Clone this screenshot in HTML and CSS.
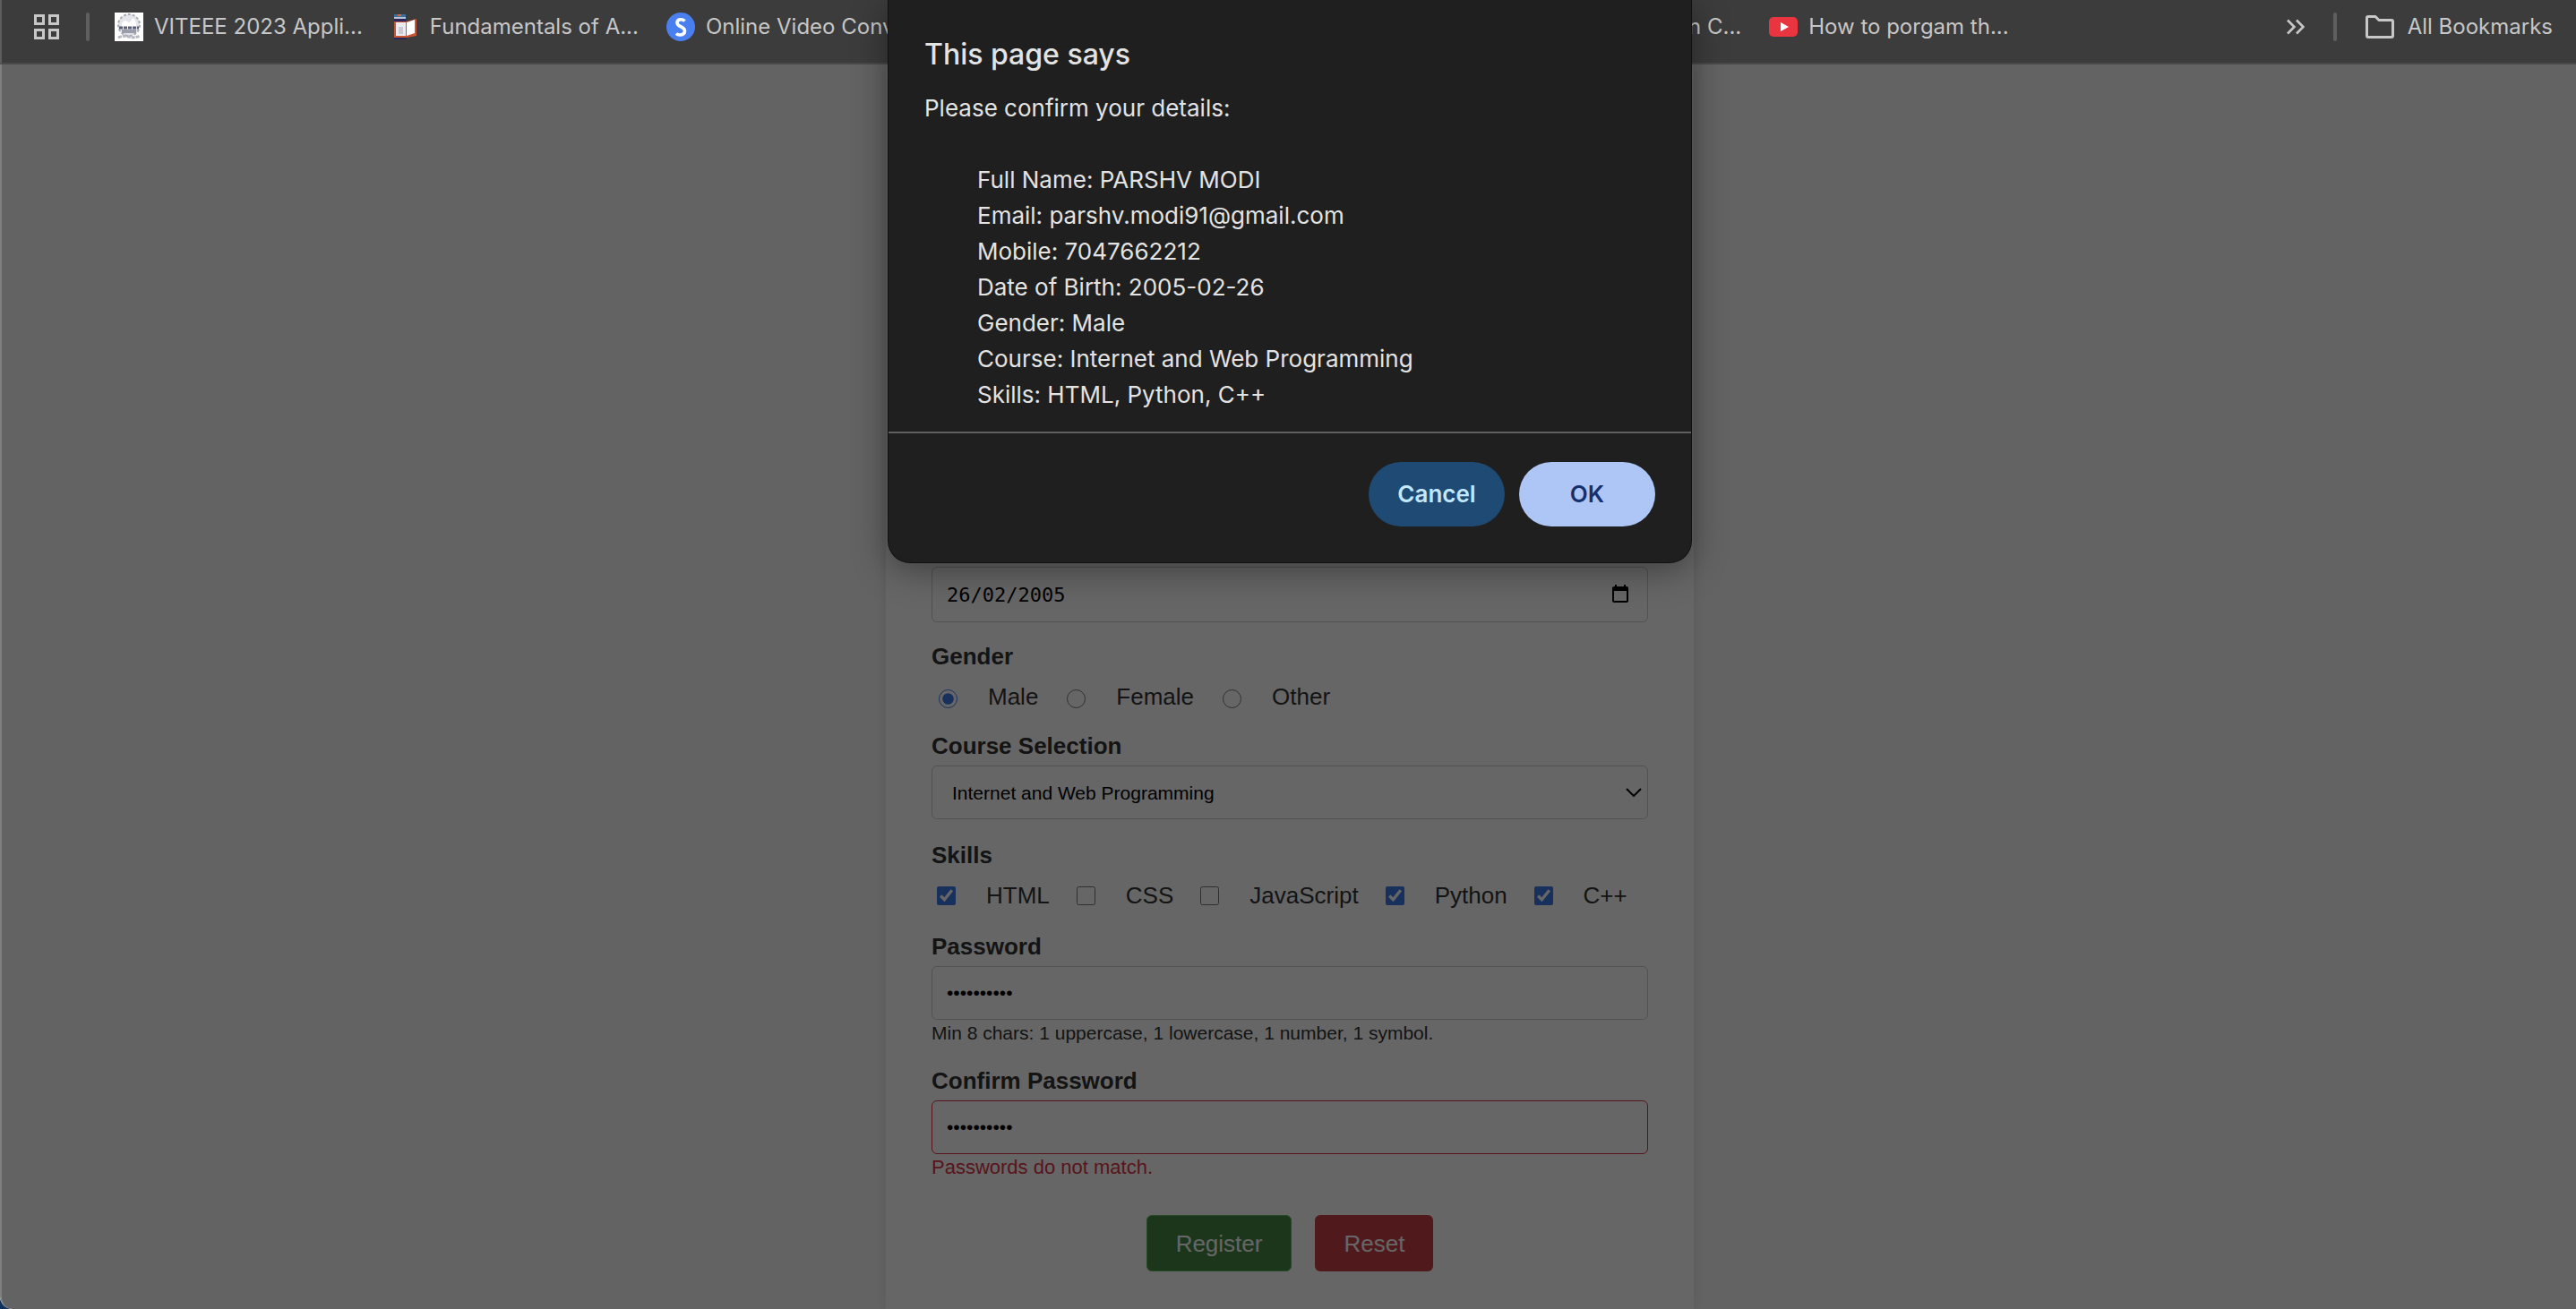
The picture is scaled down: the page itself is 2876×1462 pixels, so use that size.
FILE: index.html
```html
<!DOCTYPE html>
<html lang="en">
<head>
<meta charset="utf-8">
<title>Registration Form</title>
<link rel="stylesheet" href="styles.css">
</head>
<body>
<nav class="bookmarks" aria-label="Bookmarks">
  <button class="icon-button" aria-label="Tab groups">
    <svg width="28" height="28" viewBox="0 0 28 28" fill="none" stroke="#c7c7c7" stroke-width="3"><path d="M1.5 1.5h9v9h-9zM17.500 1.500h9v9h-9zM1.500 17.500h9v9h-9zM17.500 17.500h9v9h-9z"/></svg>
  </button>
  <span class="separator"></span>
  <div class="bookmark-list">
    <a class="bookmark" href="#">
      <svg width="32" height="32" viewBox="0 0 32 32"><path fill="#fff" d="M0 0h32v32H0z"/><circle cx="16" cy="14" r="12" fill="#e4e5ea" stroke="#a9abb5" stroke-width="2" stroke-dasharray="3 2"/><path d="M8 12q3-5 6-2t5-2 5 4v6H8z" fill="#fff"/><path d="M5 17h22" stroke="#5c6076" stroke-width="3" stroke-dasharray="4 1"/><path d="M8 21h16" stroke="#9a9daa" stroke-width="4"/><path d="M4 28q6-3 12-1t12-1" stroke="#b4b6c0" stroke-width="3" fill="none" stroke-dasharray="4 1"/></svg>
      <span>VITEEE 2023 Appli...</span>
    </a>
    <a class="bookmark" href="#">
      <svg width="32" height="32" viewBox="0 0 32 32"><path fill="#3b6f9e" d="M4 2h13v5H4z"/><path fill="#d4683f" d="M8 2h4v2H8z"/><path fill="#b9c3d8" d="M4 5h13v2H4z"/><path fill="#29265c" d="M4 7h13v3H4zM4 27h14v3H4z"/><path fill="#c85634" d="M4 10h14l11-3v19l-11 2H4z"/><path fill="#eceaf0" d="M6 11h11v15H6z"/><path fill="#fff" d="M18 11l9-3v15l-9 3z"/><path fill="#c8cad8" d="M9 16h5v8H9z"/></svg>
      <span>Fundamentals of A...</span>
    </a>
    <a class="bookmark" href="#">
      <svg width="32" height="32" viewBox="0 0 32 32"><circle cx="16" cy="16" r="16" fill="#4a7ff0"/><path d="M20.500 9.500C18 7 12 7 12 11.500c0 5 8.500 3.500 8.500 9 0 5-7 5.500-9.500 3" fill="none" stroke="#fff" stroke-width="3.600"/></svg>
      <span>Online Video Conv</span>
    </a>
  </div>
  <div class="bookmark-list bookmark-list-end">
    <a class="bookmark" href="#"><span>n C...</span></a>
    <a class="bookmark" href="#">
      <svg width="32" height="32" viewBox="0 0 32 32"><rect y="5" width="32" height="22" rx="5" fill="#ea3440"/><path d="M13 11l9 5-9 5z" fill="#fff"/></svg>
      <span>How to porgam th...</span>
    </a>
  </div>
  <div class="bookmark-tools">
    <button class="icon-button" aria-label="More bookmarks">
      <svg width="20" height="18" viewBox="0 0 20 18" fill="none" stroke="#c7c7c7" stroke-width="2.600"><path d="M1 1.500L8.500 9 1 16.500M11 1.500L18.500 9 11 16.500"/></svg>
    </button>
    <span class="separator"></span>
    <a class="bookmark" href="#">
      <svg width="32" height="26" viewBox="0 0 32 26" fill="none" stroke="#c7c7c7" stroke-width="3" stroke-linejoin="round"><path d="M1.500 3q0-1.500 1.500-1.500h8l4 4h14q1.500 0 1.500 1.500v16q0 1.500-1.500 1.500H3q-1.500 0-1.500-1.500z"/></svg>
      <span>All Bookmarks</span>
    </a>
  </div>
</nav>

<main class="page">
  <form class="card">
    <div class="date-field">
      <input class="control date-input" type="text" aria-label="Date of Birth" value="26/02/2005">
      <svg class="date-icon" width="18" height="20" viewBox="0 0 18 20"><path d="M3 0h2v2h8V0h2v2h1q2 0 2 2v14q0 2-2 2H2q-2 0-2-2V4q0-2 2-2h1zM2 7v11h14V7z"/></svg>
    </div>

    <fieldset class="group">
      <legend class="label">Gender</legend>
      <div class="choices radios">
        <label class="choice"><input type="radio" name="gender" checked><span>Male</span></label>
        <label class="choice"><input type="radio" name="gender"><span>Female</span></label>
        <label class="choice"><input type="radio" name="gender"><span>Other</span></label>
      </div>
    </fieldset>

    <div class="group">
      <label class="label" for="course">Course Selection</label>
      <div class="select-field">
        <select class="control" id="course"><option>Internet and Web Programming</option></select>
        <svg class="select-icon" width="18" height="10" viewBox="0 0 18 10" fill="none" stroke="#000" stroke-width="2"><path d="M1 1l8 8 8-8"/></svg>
      </div>
    </div>

    <fieldset class="group">
      <legend class="label">Skills</legend>
      <div class="choices">
        <label class="choice"><input type="checkbox" checked><span>HTML</span></label>
        <label class="choice"><input type="checkbox"><span>CSS</span></label>
        <label class="choice"><input type="checkbox"><span>JavaScript</span></label>
        <label class="choice"><input type="checkbox" checked><span>Python</span></label>
        <label class="choice"><input type="checkbox" checked><span>C++</span></label>
      </div>
    </fieldset>

    <div class="group">
      <label class="label" for="password">Password</label>
      <input class="control" id="password" type="password" value="Password1!">
      <p class="hint">Min 8 chars: 1 uppercase, 1 lowercase, 1 number, 1 symbol.</p>
    </div>

    <div class="group">
      <label class="label" for="confirm">Confirm Password</label>
      <input class="control invalid" id="confirm" type="password" value="Password2!">
      <p class="hint error">Passwords do not match.</p>
    </div>

    <div class="actions">
      <button class="action register" type="button">Register</button>
      <button class="action reset" type="button">Reset</button>
    </div>
  </form>
  <div class="scrim"></div>
</main>

<section class="dialog" role="dialog" aria-labelledby="dialog-title">
  <div class="dialog-body">
    <h1 class="dialog-title" id="dialog-title">This page says</h1>
    <p class="dialog-text">Please confirm your details:</p>
    <ul class="details">
      <li>Full Name: PARSHV MODI</li>
      <li>Email: parshv.modi91@gmail.com</li>
      <li>Mobile: 7047662212</li>
      <li>Date of Birth: 2005-02-26</li>
      <li>Gender: Male</li>
      <li>Course: Internet and Web Programming</li>
      <li>Skills: HTML, Python, C++</li>
    </ul>
  </div>
  <div class="dialog-actions">
    <button class="pill cancel">Cancel</button>
    <button class="pill ok">OK</button>
  </div>
</section>
</body>
</html>
```
FILE: styles.css
```css
* { box-sizing: border-box; }

body {
  margin: 0;
  min-height: 100vh;
  display: flex;
  flex-direction: column;
  background: #12305c;
  font-family: "Liberation Sans", Arial, sans-serif;
  font-size: 26px;
  line-height: 30px;
  color: #333;
}

button { border: 0; font: inherit; }
ul, p, h1, fieldset, legend { margin: 0; padding: 0; border: 0; }

/* Bookmarks bar */
.bookmarks {
  display: flex;
  align-items: center;
  height: 72px;
  padding: 0 26px 10px 36px;
  background: #3c3c3c;
  border-left: 2px solid #5c5c5c;
  border-bottom: 2px solid #494949;
  color: #c7c7c7;
  font-family: Inter, sans-serif;
  font-size: 24px;
}

.icon-button { display: flex; padding: 0; background: none; }

.separator {
  width: 4px;
  height: 32px;
  margin: 0 28px 0 30px;
  border-radius: 2px;
  background: #5f5f5f;
}

.bookmark-list { display: flex; gap: 31px; }
.bookmark-list-end { margin-left: auto; }

.bookmark {
  display: flex;
  align-items: center;
  gap: 12px;
  color: inherit;
  text-decoration: none;
  white-space: nowrap;
}

.bookmark-tools { display: flex; align-items: center; margin-left: 310px; }
.bookmark-tools .separator { margin: 0 32px; }
.bookmark-tools .bookmark { gap: 15px; }

/* Registration page */
.page {
  position: relative;
  flex: 1;
  display: flex;
  justify-content: center;
  padding-left: 4px;
  overflow: hidden;
  border-bottom-left-radius: 14px;
  background: #f8f8f8;
}

.card {
  flex: 0 1 902px;
  display: flex;
  flex-direction: column;
  justify-content: flex-end;
  padding: 0 51px 42px;
  background: #fff;
  box-shadow: 0 0 16px rgba(0, 0, 0, 0.1);
}

.scrim {
  position: absolute;
  inset: 0;
  background: rgba(0, 0, 0, 0.6);
  border-left: 2px solid #7f7f7f;
  border-bottom-left-radius: 14px;
}

.group { margin-top: 23px; }

.label {
  display: block;
  margin-bottom: 7px;
  font-weight: bold;
}

.control {
  display: block;
  width: 100%;
  height: 60px;
  padding: 0 16px;
  border: 1px solid #ccc;
  border-radius: 6px;
  background: #fff;
  color: #000;
  font-family: inherit;
  font-size: 21px;
}

.invalid { border-color: #dc3545; }

.date-field, .select-field { position: relative; }
.select-field { margin-bottom: 2px; }
.date-input { height: 62px; font-family: "DejaVu Sans Mono", monospace; font-size: 22px; }
.date-icon { position: absolute; right: 22px; top: 20px; }
.select-icon { position: absolute; right: 7px; top: 25px; }
select.control { appearance: none; padding-left: 22px; }

.choices {
  display: flex;
  gap: 30px;
  padding: 8px 6px 4px;
}

.choice { display: flex; align-items: center; gap: 34px; }
.choice input { width: 21px; height: 21px; margin: 0; accent-color: #3b78e7; }
.radios { gap: 32px; padding: 8px 8px 2px; }
.radios input { margin-top: 5px; }

.hint { font-size: 21px; line-height: 30px; }
.error { color: #dc3545; font-size: 22px; }

.actions {
  display: flex;
  justify-content: center;
  gap: 26px;
  margin-top: 38px;
}

.action {
  height: 63px;
  padding: 0 32px;
  border-radius: 6px;
  color: #fff;
}

.register { border: 1px solid #5cb85c; background: #468847; }
.reset { background: #c94248; }

/* Confirmation dialog */
.dialog {
  position: absolute;
  top: 0;
  left: 50%;
  width: 896px;
  margin-left: -446px;
  border-radius: 0 0 24px 24px;
  background: #1f1f1f;
  box-shadow: 0 0 0 1px #111, 0 8px 40px rgba(0, 0, 0, 0.4);
  color: #e3e3e3;
  font-family: Inter, sans-serif;
  font-size: 26px;
  line-height: 40px;
}

.dialog-body { padding: 41px 40px 21px; border-bottom: 2px solid #5f5f5f; }
.dialog-title { margin-bottom: 20px; font-size: 32px; line-height: 40px; font-weight: 500; }
.details { padding: 40px 59px 0; list-style: none; }

.dialog-actions {
  display: flex;
  justify-content: flex-end;
  gap: 16px;
  padding: 32px 40px 40px;
}

.pill {
  width: 152px;
  height: 72px;
  border-radius: 36px;
  font-weight: 600;
}

.cancel { background: #1f4a73; color: #c2e7ff; }
.ok { background: #aec6f6; color: #16306e; }
```
